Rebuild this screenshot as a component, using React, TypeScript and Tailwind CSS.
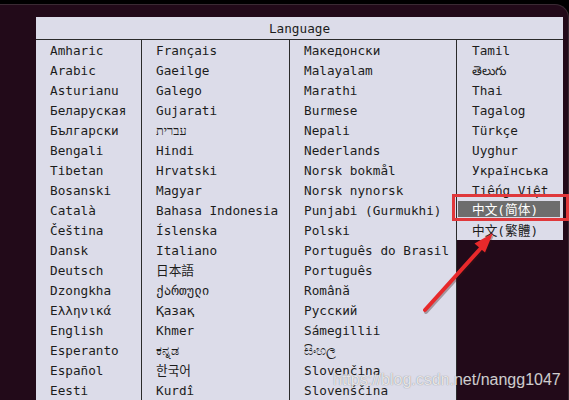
import React from "react";

const col1 = ["Amharic","Arabic","Asturianu","Беларуская","Български","Bengali","Tibetan","Bosanski","Català","Čeština","Dansk","Deutsch","Dzongkha","Ελληνικά","English","Esperanto","Español","Eesti"];
const col2 = ["Français","Gaeilge","Galego","Gujarati","עברית","Hindi","Hrvatski","Magyar","Bahasa Indonesia","Íslenska","Italiano","日本語","ქართული","Қазақ","Khmer","ಕನ್ನಡ","한국어","Kurdî"];
const col3 = ["Македонски","Malayalam","Marathi","Burmese","Nepali","Nederlands","Norsk bokmål","Norsk nynorsk","Punjabi (Gurmukhi)","Polski","Português do Brasil","Português","Română","Русский","Sámegillii","සිංහල","Slovenčina","Slovenščina"];
const col4 = ["Tamil","తెలుగు","Thai","Tagalog","Türkçe","Uyghur","Українська","Tiếng Việt","中文(简体)","中文(繁體)"];

const font = "font-['DejaVu_Sans_Mono','Noto_Sans_CJK_SC',monospace]";

function Col({ items, className, pl }: { items: string[]; className: string; pl: string }) {
  return (
    <div className={`${className} bg-[#dcdce9] pb-[40px]`}>
      {items.map((t) => (
        <div key={t} className={`h-[20px] pt-[1px] leading-[20px] ${pl} whitespace-nowrap`}>
          {t}
        </div>
      ))}
    </div>
  );
}

export default function App() {
  return (
    <div className="relative w-[569px] h-[400px] overflow-hidden bg-black">
      <div className="pt-[4px] h-full">
        <div className="h-full bg-[#220a19] rounded-tr-[14px] border-t border-r border-[#3a2a33]">
          <div className={`ml-[36px] mt-[12px] w-[527px] ${font} text-[12.7px] text-[#1c1c1c]`}>
            <div className="h-[23px] bg-[#dcdce9] border-b border-[#2a2a2a] flex items-center justify-center pt-[1px]">
              Language
            </div>
            <div className="flex items-start">
              <Col items={col1} className="w-[106px] border-r border-[#2a2a2a]" pl="pl-[14px]" />
              <Col items={col2} className="w-[148px] border-r border-[#2a2a2a]" pl="pl-[14px]" />
              <Col items={col3} className="w-[167px] border-r border-[#2a2a2a]" pl="pl-[14px]" />
              <div className="w-[106px] bg-[#dcdce9]">
                {col4.map((t) =>
                  t === "中文(简体)" ? (
                    <div key={t} className="h-[20px] pt-[1px] pl-[1px] pr-[3px]">
                      <div className="h-[16px] leading-[17px] bg-[#6d6d6d] text-white pl-[14px] whitespace-nowrap">
                        {t}
                      </div>
                    </div>
                  ) : (
                    <div key={t} className="h-[20px] pt-[1px] leading-[20px] pl-[15px] whitespace-nowrap">
                      {t}
                    </div>
                  )
                )}
              </div>
            </div>
          </div>
        </div>
      </div>

      <div className="absolute left-[452px] top-[194px] w-[117px] h-[27px] border-[3px] border-[#e0383b]" />

      <svg className="absolute left-0 top-0 pointer-events-none" width="569" height="400" viewBox="0 0 569 400">
        <line x1="426" y1="312" x2="482" y2="250" stroke="rgba(60,20,20,0.35)" strokeWidth="4" strokeLinecap="round" />
        <polygon points="494,235 486,254 475.5,245" fill="rgba(60,20,20,0.3)" />
        <line x1="425" y1="310" x2="481" y2="248" stroke="#e8292b" strokeWidth="4" strokeLinecap="round" />
        <polygon points="493,233 485,252.6 474.5,243.4" fill="#e8292b" />
      </svg>

      <div className="absolute left-[333px] top-[370px] font-['Liberation_Sans',Arial,sans-serif] text-[16px] leading-[20px] text-white/80 [text-shadow:0_0_1px_rgba(0,0,0,0.5)] whitespace-nowrap">
        https://blog.csdn.net/nangg1047
      </div>
    </div>
  );
}
